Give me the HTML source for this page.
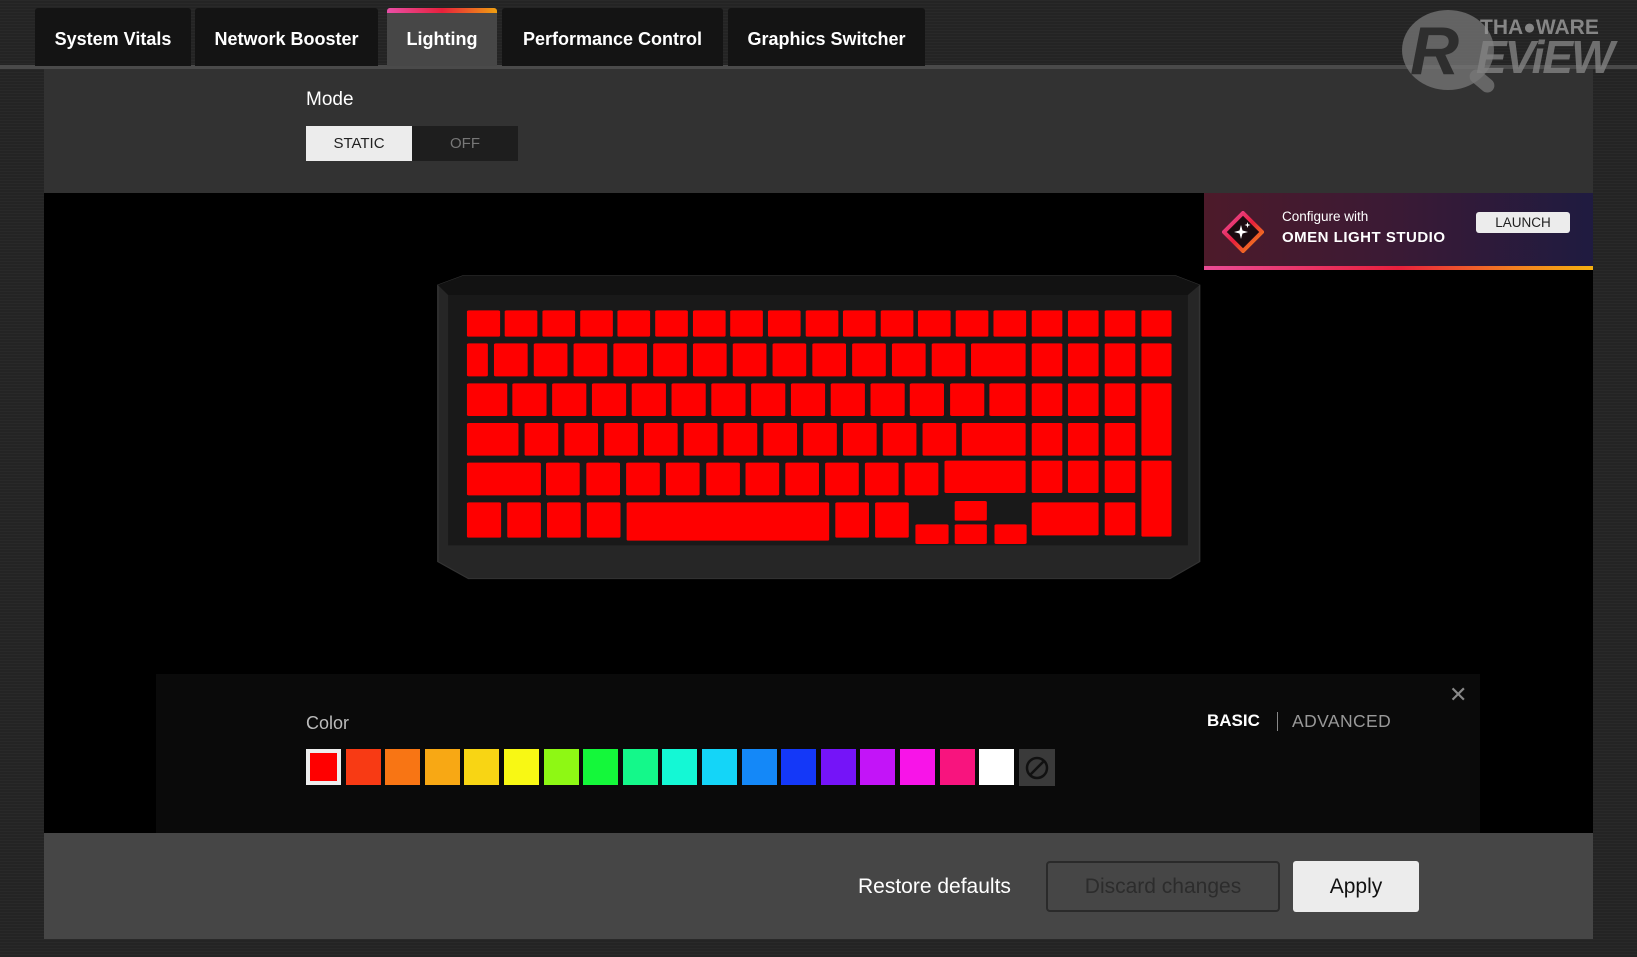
<!DOCTYPE html>
<html><head><meta charset="utf-8"><style>
*{margin:0;padding:0;box-sizing:border-box}
body{width:1637px;height:957px;overflow:hidden;background:#242424;font-family:"Liberation Sans",sans-serif;position:relative;
background-image:repeating-linear-gradient(180deg,rgba(255,255,255,0.025) 0 1px,transparent 1px 3px);}
.abs{position:absolute}
.tab{position:absolute;top:8px;height:58px;background:#141414;color:#fff;font-weight:bold;font-size:18px;display:flex;align-items:center;justify-content:center;border-radius:3px 3px 0 0;padding-top:4px}
</style></head><body>
<div class="abs" style="left:0;top:65px;width:1637px;height:4px;background:#4a4a4a"></div>
<div class="tab" style="left:35px;width:156px">System Vitals</div>
<div class="tab" style="left:195px;width:183px">Network Booster</div>
<div class="tab" style="left:387px;width:110px;background:#474747;top:8px">Lighting</div>
<div class="abs" style="left:387px;top:8px;width:110px;height:5px;background:linear-gradient(90deg,#e94fa8,#e8203c 50%,#f0a010);border-radius:3px 3px 0 0"></div>
<div class="tab" style="left:502px;width:221px">Performance Control</div>
<div class="tab" style="left:728px;width:197px">Graphics Switcher</div>

<!-- top panel -->
<div class="abs" style="left:44px;top:69px;width:1549px;height:124px;background:#323232"></div>
<div class="abs" style="left:306px;top:89px;font-size:19px;color:#fff">Mode</div>
<div class="abs" style="left:306px;top:126px;width:106px;height:35px;background:#ececec;color:#222;font-size:15px;display:flex;align-items:center;justify-content:center">STATIC</div>
<div class="abs" style="left:412px;top:126px;width:106px;height:35px;background:#1e1e1e;color:#777;font-size:15px;display:flex;align-items:center;justify-content:center">OFF</div>

<!-- black area -->
<div class="abs" style="left:44px;top:193px;width:1549px;height:646px;background:#000"></div>

<!-- banner -->
<div class="abs" style="left:1204px;top:193px;width:389px;height:77px;background:linear-gradient(90deg,#4d1a2a,#3a1a35 50%,#1f1b40)"></div>
<div class="abs" style="left:1204px;top:266px;width:389px;height:4px;background:linear-gradient(90deg,#ea4c96,#e8203c 50%,#f28020 80%,#f5b010)"></div>
<svg class="abs" style="left:1222px;top:211px" width="42" height="42" viewBox="0 0 42 42">
<defs><linearGradient id="g" x1="0" y1="0" x2="1" y2="1"><stop offset="0" stop-color="#e94fa8"/><stop offset=".5" stop-color="#e8203c"/><stop offset="1" stop-color="#f5a010"/></linearGradient></defs>
<polygon points="21,2 40,21 21,40 2,21" fill="#1a0b10" stroke="url(#g)" stroke-width="4"/>
<path d="M19 14 L20.5 19.5 L26 21 L20.5 22.5 L19 28 L17.5 22.5 L12 21 L17.5 19.5Z" fill="#fff"/>
<path d="M25.5 11 L26.2 13.3 L28.5 14 L26.2 14.7 L25.5 17 L24.8 14.7 L22.5 14 L24.8 13.3Z" fill="#fff"/>
</svg>
<div class="abs" style="left:1282px;top:209px;font-size:13.5px;color:#fff">Configure with</div>
<div class="abs" style="left:1282px;top:229px;font-size:15px;font-weight:bold;color:#fff;letter-spacing:0.5px">OMEN LIGHT STUDIO</div>
<div class="abs" style="left:1476px;top:212px;width:94px;height:21px;background:#ececec;border-radius:3px;color:#222;font-size:13.5px;display:flex;align-items:center;justify-content:center">LAUNCH</div>

<!-- keyboard -->
<svg class="abs" style="left:420px;top:270px" width="800" height="320" viewBox="0 0 1568 960" preserveAspectRatio="none">
<polygon points="85,17 1480,17 1528,45 1528,875 1470,926 95,926 35,875 35,45" fill="#262626" stroke="#333" stroke-width="3"/>
<polygon points="85,17 1480,17 1528,45 1505,75 55,75 35,45" fill="#121212"/>
<rect x="55" y="75" width="1450" height="751" fill="#191919"/>
<g fill="#ff0000">
<rect x="92" y="121" width="65" height="79" rx="4"/><rect x="166" y="121" width="64" height="79" rx="4"/><rect x="240" y="121" width="64" height="79" rx="4"/><rect x="314" y="121" width="64" height="79" rx="4"/><rect x="387" y="121" width="64" height="79" rx="4"/><rect x="461" y="121" width="64" height="79" rx="4"/><rect x="535" y="121" width="64" height="79" rx="4"/><rect x="608" y="121" width="64" height="79" rx="4"/><rect x="682" y="121" width="64" height="79" rx="4"/><rect x="756" y="121" width="64" height="79" rx="4"/><rect x="829" y="121" width="64" height="79" rx="4"/><rect x="903" y="121" width="64" height="79" rx="4"/><rect x="976" y="121" width="64" height="79" rx="4"/><rect x="1050" y="121" width="64" height="79" rx="4"/><rect x="1124" y="121" width="64" height="79" rx="4"/><rect x="1199" y="121" width="60" height="79" rx="4"/><rect x="1270" y="121" width="60" height="79" rx="4"/><rect x="1342" y="121" width="60" height="79" rx="4"/><rect x="1414" y="121" width="59" height="79" rx="4"/>
<rect x="92" y="220" width="41" height="99" rx="4"/>
<rect x="145" y="220" width="66" height="99" rx="4"/><rect x="223" y="220" width="66" height="99" rx="4"/><rect x="301" y="220" width="66" height="99" rx="4"/><rect x="379" y="220" width="66" height="99" rx="4"/><rect x="457" y="220" width="66" height="99" rx="4"/><rect x="535" y="220" width="66" height="99" rx="4"/><rect x="613" y="220" width="66" height="99" rx="4"/><rect x="691" y="220" width="66" height="99" rx="4"/><rect x="769" y="220" width="66" height="99" rx="4"/><rect x="847" y="220" width="66" height="99" rx="4"/><rect x="925" y="220" width="66" height="99" rx="4"/><rect x="1003" y="220" width="66" height="99" rx="4"/>
<rect x="1080" y="220" width="107" height="99" rx="4"/><rect x="1199" y="220" width="60" height="99" rx="4"/><rect x="1270" y="220" width="60" height="99" rx="4"/><rect x="1342" y="220" width="60" height="99" rx="4"/><rect x="1414" y="220" width="59" height="99" rx="4"/>
<rect x="92" y="340" width="79" height="98" rx="4"/>
<rect x="181" y="340" width="67" height="98" rx="4"/><rect x="259" y="340" width="67" height="98" rx="4"/><rect x="337" y="340" width="67" height="98" rx="4"/><rect x="415" y="340" width="67" height="98" rx="4"/><rect x="493" y="340" width="67" height="98" rx="4"/><rect x="571" y="340" width="67" height="98" rx="4"/><rect x="649" y="340" width="67" height="98" rx="4"/><rect x="727" y="340" width="67" height="98" rx="4"/><rect x="805" y="340" width="67" height="98" rx="4"/><rect x="883" y="340" width="67" height="98" rx="4"/><rect x="960" y="340" width="67" height="98" rx="4"/><rect x="1039" y="340" width="67" height="98" rx="4"/><rect x="1116" y="340" width="71" height="98" rx="4"/>
<rect x="1199" y="340" width="60" height="98" rx="4"/><rect x="1270" y="340" width="60" height="98" rx="4"/><rect x="1342" y="340" width="60" height="98" rx="4"/><rect x="1414" y="340" width="59" height="217" rx="4"/>
<rect x="92" y="459" width="101" height="98" rx="4"/>
<rect x="205" y="459" width="66" height="98" rx="4"/><rect x="283" y="459" width="66" height="98" rx="4"/><rect x="361" y="459" width="66" height="98" rx="4"/><rect x="439" y="459" width="66" height="98" rx="4"/><rect x="517" y="459" width="66" height="98" rx="4"/><rect x="595" y="459" width="66" height="98" rx="4"/><rect x="673" y="459" width="66" height="98" rx="4"/><rect x="751" y="459" width="66" height="98" rx="4"/><rect x="829" y="459" width="66" height="98" rx="4"/><rect x="907" y="459" width="66" height="98" rx="4"/><rect x="985" y="459" width="66" height="98" rx="4"/>
<rect x="1062" y="459" width="125" height="98" rx="4"/><rect x="1199" y="459" width="60" height="98" rx="4"/><rect x="1270" y="459" width="60" height="98" rx="4"/><rect x="1342" y="459" width="60" height="98" rx="4"/>
<rect x="92" y="578" width="145" height="98" rx="4"/>
<rect x="247" y="578" width="66" height="98" rx="4"/><rect x="326" y="578" width="66" height="98" rx="4"/><rect x="404" y="578" width="66" height="98" rx="4"/><rect x="482" y="578" width="66" height="98" rx="4"/><rect x="561" y="578" width="66" height="98" rx="4"/><rect x="638" y="578" width="66" height="98" rx="4"/><rect x="716" y="578" width="66" height="98" rx="4"/><rect x="794" y="578" width="66" height="98" rx="4"/><rect x="872" y="578" width="66" height="98" rx="4"/><rect x="950" y="578" width="66" height="98" rx="4"/>
<rect x="1028" y="572" width="159" height="97" rx="4"/><rect x="1199" y="572" width="60" height="97" rx="4"/><rect x="1270" y="572" width="60" height="97" rx="4"/><rect x="1342" y="572" width="60" height="97" rx="4"/><rect x="1414" y="572" width="59" height="228" rx="4"/>
<rect x="92" y="697" width="67" height="106" rx="4"/><rect x="171" y="697" width="66" height="106" rx="4"/><rect x="249" y="697" width="66" height="106" rx="4"/><rect x="327" y="697" width="66" height="106" rx="4"/>
<rect x="405" y="697" width="397" height="115" rx="4"/><rect x="814" y="697" width="66" height="106" rx="4"/><rect x="892" y="697" width="66" height="106" rx="4"/>
<rect x="1048" y="693" width="63" height="59" rx="4"/><rect x="971" y="763" width="65" height="59" rx="4"/><rect x="1048" y="763" width="63" height="59" rx="4"/><rect x="1126" y="763" width="63" height="59" rx="4"/>
<rect x="1199" y="697" width="131" height="99" rx="4"/><rect x="1342" y="697" width="60" height="99" rx="4"/>
</g>
</svg>

<!-- color panel -->
<div class="abs" style="left:156px;top:674px;width:1324px;height:165px;background:#0a0a0a"></div>
<div class="abs" style="left:306px;top:713px;font-size:18px;color:#bbb">Color</div>
<div class="abs" style="left:1207px;top:711px;font-size:17px;font-weight:bold;color:#fff">BASIC</div>
<div class="abs" style="left:1277px;top:712px;width:1px;height:19px;background:#888"></div>
<div class="abs" style="left:1292px;top:711px;font-size:17.5px;color:#999;letter-spacing:0.4px">ADVANCED</div>
<div class="abs" style="left:1449px;top:682px;font-size:22px;color:#888">✕</div>
<div class="abs" style="left:306px;top:749px;display:flex;gap:4.6px">
<div style="width:35px;height:36px;background:#ff0000;border:4px solid #eee"></div>
<div style="width:35px;height:36px;background:#f83a14"></div>
<div style="width:35px;height:36px;background:#f87514"></div>
<div style="width:35px;height:36px;background:#f8a814"></div>
<div style="width:35px;height:36px;background:#f8d514"></div>
<div style="width:35px;height:36px;background:#f8f814"></div>
<div style="width:35px;height:36px;background:#8ef814"></div>
<div style="width:35px;height:36px;background:#14f83a"></div>
<div style="width:35px;height:36px;background:#14f88a"></div>
<div style="width:35px;height:36px;background:#14f8d5"></div>
<div style="width:35px;height:36px;background:#14d5f8"></div>
<div style="width:35px;height:36px;background:#1488f8"></div>
<div style="width:35px;height:36px;background:#1438f8"></div>
<div style="width:35px;height:36px;background:#7514f8"></div>
<div style="width:35px;height:36px;background:#c314f8"></div>
<div style="width:35px;height:36px;background:#f814e8"></div>
<div style="width:35px;height:36px;background:#f8147e"></div>
<div style="width:35px;height:36px;background:#ffffff"></div>
<div style="width:36px;height:37px;background:#3a3a3a;display:flex;align-items:center;justify-content:center"><svg width="26" height="26" viewBox="0 0 26 26"><circle cx="13" cy="13" r="10" fill="none" stroke="#111" stroke-width="2.5"/><line x1="6" y1="20" x2="20" y2="6" stroke="#111" stroke-width="2.5"/></svg></div>
</div>

<!-- bottom bar -->
<div class="abs" style="left:44px;top:833px;width:1549px;height:106px;background:#464646"></div>
<div class="abs" style="left:858px;top:875px;font-size:21px;color:#fff">Restore defaults</div>
<div class="abs" style="left:1046px;top:861px;width:234px;height:51px;border:2px solid #2a2a2a;border-radius:4px;color:#2c2c2c;font-size:21px;display:flex;align-items:center;justify-content:center">Discard changes</div>
<div class="abs" style="left:1293px;top:861px;width:126px;height:51px;background:#ececec;border-radius:3px;color:#111;font-size:21px;display:flex;align-items:center;justify-content:center">Apply</div>

<!-- watermark (on top) -->
<div class="abs" style="left:1402px;top:10px;width:92px;height:80px;border-radius:50%;background:rgba(120,120,120,0.75)"></div>
<div class="abs" style="left:1468px;top:74px;width:28px;height:14px;background:rgba(120,120,120,0.75);transform:rotate(40deg);border-radius:7px"></div>
<div class="abs" style="left:1410px;top:12px;font-size:68px;font-weight:bold;font-style:italic;color:#2e2e2e">R</div>
<div class="abs" style="left:1480px;top:16px;font-size:21px;font-weight:bold;color:rgba(150,150,150,0.85)">THA&#9679;WARE</div>
<div class="abs" style="left:1476px;top:30px;font-size:46px;font-weight:bold;font-style:italic;color:rgba(130,130,130,0.8);letter-spacing:-2px">EViEW</div>
</body></html>
